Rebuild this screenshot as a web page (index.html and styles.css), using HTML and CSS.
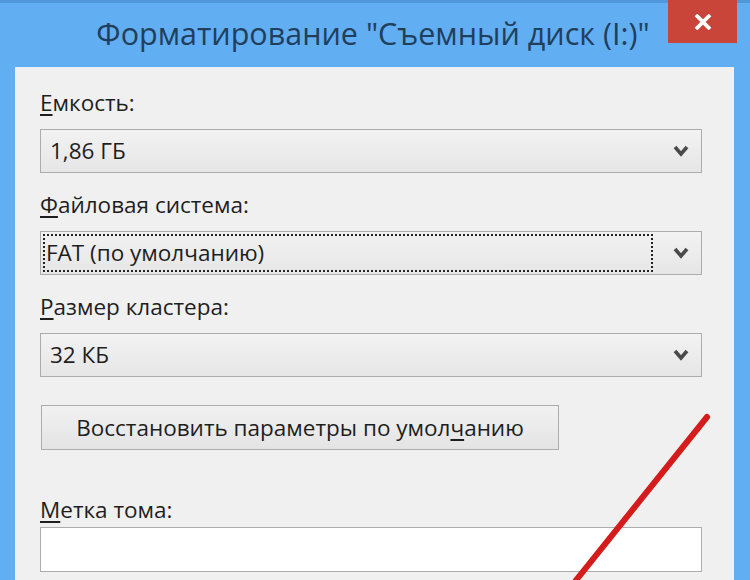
FILE: index.html
```html
<!DOCTYPE html>
<html lang="ru">
<head>
<meta charset="utf-8">
<title>Форматирование</title>
<link rel="stylesheet" href="styles.css">
</head>
<body>
<div class="window">
  <header class="titlebar">
    <h1 class="title">Форматирование "Съемный диск (I:)"</h1>
    <button class="close" aria-label="Закрыть">
      <svg width="18" height="16" viewBox="0 0 18 16"><path d="M2 1 L16 15 M16 1 L2 15" stroke="#fff" stroke-width="3.8" stroke-linecap="butt"/></svg>
    </button>
  </header>
  <main class="panel">
    <div class="field">
      <label class="label"><u>Е</u>мкость:</label>
      <div class="combo"><span class="value">1,86 ГБ</span><span class="chev"><svg width="16" height="12" viewBox="0 0 16 12"><path d="M2 2 L8 9 L14 2" fill="none" stroke="#4a4a4a" stroke-width="3.6"/></svg></span></div>
    </div>
    <div class="field">
      <label class="label"><u>Ф</u>айловая система:</label>
      <div class="combo"><span class="value focus">FAT (по умолчанию)</span><span class="chev"><svg width="16" height="12" viewBox="0 0 16 12"><path d="M2 2 L8 9 L14 2" fill="none" stroke="#4a4a4a" stroke-width="3.6"/></svg></span></div>
    </div>
    <div class="field">
      <label class="label"><u>Р</u>азмер кластера:</label>
      <div class="combo"><span class="value">32 КБ</span><span class="chev"><svg width="16" height="12" viewBox="0 0 16 12"><path d="M2 2 L8 9 L14 2" fill="none" stroke="#4a4a4a" stroke-width="3.6"/></svg></span></div>
    </div>
    <button class="btn">Восстановить параметры по умол<u>ч</u>анию</button>
    <div class="field label-field">
      <label class="label"><u>М</u>етка тома:</label>
      <div class="textbox"></div>
    </div>
    <svg class="strike" width="150" height="175" viewBox="0 0 150 175"><line x1="134" y1="5" x2="0" y2="172" stroke="#d41c1c" stroke-width="6" stroke-linecap="round"/></svg>
  </main>
</div>
</body>
</html>
```
FILE: styles.css
```css
html, body {
  margin: 0;
  padding: 0;
}
body {
  width: 750px;
  height: 580px;
  overflow: hidden;
  background: #62aef2;
  font-family: "Open Sans", "Noto Sans", sans-serif;
}
.window {
  position: relative;
  width: 750px;
  height: 580px;
  display: flex;
  flex-direction: column;
  background: #62aef2;
  border-top: 3px solid #4f97da;
  box-sizing: border-box;
}
.titlebar {
  height: 64px;
  display: flex;
  align-items: center;
  justify-content: center;
  flex: none;
}
.title {
  margin: 0 4px 4px 0;
  font-weight: normal;
  font-size: 30.5px;
  color: #213f5d;
  letter-spacing: 0;
}
.close {
  position: absolute;
  top: -3px;
  right: 13px;
  width: 69px;
  height: 43px;
  border: none;
  padding: 0;
  background: #c94439;
  display: flex;
  align-items: center;
  justify-content: center;
}
.panel {
  position: relative;
  flex: 1;
  margin: 0 16px 0 15px;
  background: #f0f0f0;
  border-top: 1px solid #e8f2fb;
  padding: 23px 32px 0 25px;
  display: flex;
  flex-direction: column;
}
.field {
  display: flex;
  flex-direction: column;
  gap: 14px;
  margin-bottom: 20px;
}
.label {
  font-size: 22.5px;
  line-height: 24px;
  color: #1e1e1e;
}
.label u {
  text-decoration-thickness: 2px;
  text-underline-offset: 3px;
}
.combo {
  height: 44px;
  box-sizing: border-box;
  border: 1px solid #acacac;
  background: linear-gradient(#f2f2f2, #e6e6e6);
  display: flex;
  align-items: center;
  justify-content: space-between;
  padding: 0 12px 0 2px;
}
.value {
  font-size: 22.5px;
  line-height: 30px;
  color: #1e1e1e;
  padding: 2px 5px;
  border: 2px dotted transparent;
}
.value.focus {
  flex: 1;
  border-color: #222;
  margin-right: 20px;
  padding: 2px 1px;
}
.chev {
  display: flex;
}
.btn {
  align-self: flex-start;
  width: 518px;
  height: 45px;
  margin: 8px 0 0 1px;
  border: 1px solid #adadad;
  background: linear-gradient(#f1f1f1, #e4e4e4);
  font-family: inherit;
  font-size: 22.5px;
  color: #1e1e1e;
  padding: 0;
}
.btn u {
  text-decoration-thickness: 2px;
  text-underline-offset: 3px;
}
.label-field {
  margin-top: 48px;
  gap: 5px;
}
.textbox {
  height: 45px;
  box-sizing: border-box;
  border: 1px solid #acacac;
  background: #fff;
}
.strike {
  position: absolute;
  left: 558px;
  top: 344px;
}
```
